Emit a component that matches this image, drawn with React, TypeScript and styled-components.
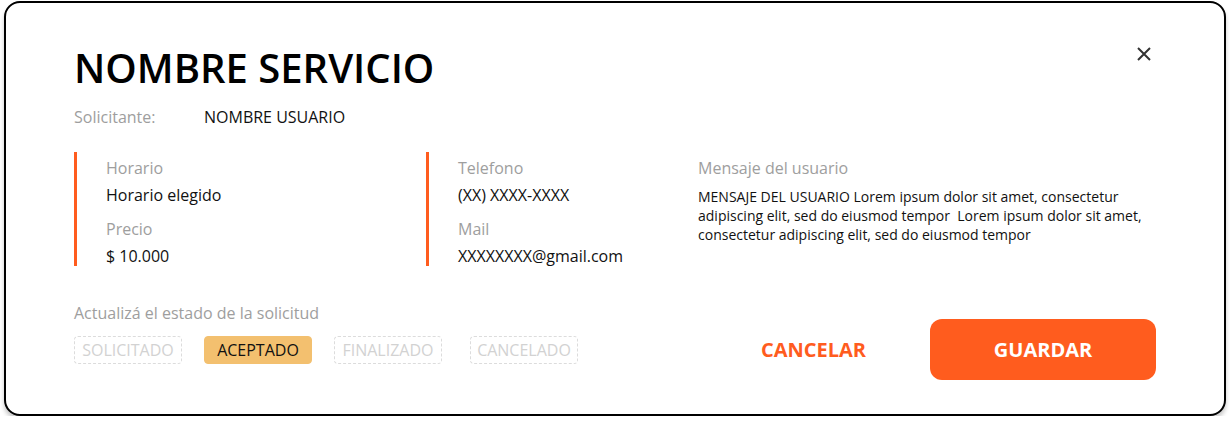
import React from "react";
import styled, { createGlobalStyle } from "styled-components";

const ORANGE = "#ff5c1e";

const Global = createGlobalStyle`
  html, body { margin: 0; padding: 0; background: #ffffff; }
  body { font-family: "Open Sans", "Noto Sans", sans-serif; color: #111; }
  * { box-sizing: border-box; }
`;

const Page = styled.div`
  padding: 1px 4px 0 4px;
`;

const Card = styled.div`
  width: 1222px;
  height: 415px;
  border: 2px solid #000;
  border-radius: 16px;
  background: #fff;
  box-shadow: 0 4px 4px rgba(0, 0, 0, 0.22);
  padding: 43px 68px 0 68px;
  display: flex;
  flex-direction: column;
`;

const Header = styled.div`
  display: flex;
  justify-content: space-between;
  align-items: flex-start;
`;

const Title = styled.h1`
  margin: 0;
  font-size: 40px;
  line-height: 44px;
  font-weight: 600;
  color: #000;
`;

const CloseButton = styled.button`
  width: 24px;
  height: 24px;
  margin-top: -4px;
  padding: 0;
  border: none;
  background: transparent;
  display: flex;
  align-items: center;
  justify-content: center;
  cursor: pointer;
`;

const InfoRow = styled.div`
  display: flex;
  margin-top: 17px;
`;

const Label = styled.span<{ $width?: number }>`
  color: #9e9e9e;
  font-size: 16px;
  line-height: 20px;
  ${(p) => (p.$width ? `width: ${p.$width}px;` : "")}
`;

const Value = styled.span`
  color: #111;
  font-size: 16px;
  line-height: 20px;
`;

const Details = styled.div`
  display: grid;
  grid-template-columns: 352px 272px 1fr;
  margin-top: 25px;
`;

const Column = styled.div<{ $bar?: boolean }>`
  display: flex;
  flex-direction: column;
  padding: 6px 0 1px ${(p) => (p.$bar ? 29 : 0)}px;
  border-left: ${(p) => (p.$bar ? `3px solid ${ORANGE}` : "none")};
  height: 114px;
`;

const Field = styled.div`
  display: flex;
  flex-direction: column;
  gap: 7px;
  & + & {
    margin-top: 14px;
  }
`;

const Message = styled.p`
  margin: 9px 0 0 0;
  font-size: 14px;
  line-height: 19px;
  color: #111;
  width: 458px;
`;

const Footer = styled.div`
  display: flex;
  justify-content: space-between;
  align-items: flex-end;
  margin-top: 37px;
`;

const StatusBlock = styled.div`
  display: flex;
  flex-direction: column;
  gap: 13px;
  padding-bottom: 16px;
`;

const Chips = styled.div`
  display: flex;
  gap: 22px;
`;

const Chip = styled.span<{ $active?: boolean; $extra?: number }>`
  width: 108px;
  height: 28px;
  display: flex;
  align-items: center;
  justify-content: center;
  font-size: 16px;
  border-radius: 4px;
  margin-left: ${(p) => p.$extra ?? 0}px;
  border: 1px ${(p) => (p.$active ? "solid #f3c06f" : "dashed #dcdcdc")};
  background: ${(p) => (p.$active ? "#f3c06f" : "transparent")};
  color: ${(p) => (p.$active ? "#111" : "#d2d2d2")};
`;

const Actions = styled.div`
  display: flex;
  align-items: center;
  gap: 64px;
`;

const TextButton = styled.button`
  border: none;
  background: transparent;
  padding: 0;
  font-family: inherit;
  font-size: 20px;
  font-weight: 700;
  color: ${ORANGE};
  cursor: pointer;
`;

const PrimaryButton = styled.button`
  width: 226px;
  height: 61px;
  border: none;
  border-radius: 12px;
  background: ${ORANGE};
  color: #fff;
  font-family: inherit;
  font-size: 20px;
  font-weight: 700;
  cursor: pointer;
`;

export default function App() {
  return (
    <>
      <Global />
      <Page>
        <Card>
          <Header>
            <Title>NOMBRE SERVICIO</Title>
            <CloseButton aria-label="Cerrar">
              <svg width="14" height="14" viewBox="0 0 14 14">
                <path d="M1 1 L13 13 M13 1 L1 13" stroke="#333" strokeWidth="2" strokeLinecap="butt" />
              </svg>
            </CloseButton>
          </Header>
          <InfoRow>
            <Label $width={130}>Solicitante:</Label>
            <Value>NOMBRE USUARIO</Value>
          </InfoRow>
          <Details>
            <Column $bar>
              <Field>
                <Label>Horario</Label>
                <Value>Horario elegido</Value>
              </Field>
              <Field>
                <Label>Precio</Label>
                <Value>$ 10.000</Value>
              </Field>
            </Column>
            <Column $bar>
              <Field>
                <Label>Telefono</Label>
                <Value>(XX) XXXX-XXXX</Value>
              </Field>
              <Field>
                <Label>Mail</Label>
                <Value>XXXXXXXX@gmail.com</Value>
              </Field>
            </Column>
            <Column>
              <Label>Mensaje del usuario</Label>
              <Message>
                MENSAJE DEL USUARIO Lorem ipsum dolor sit amet, consectetur adipiscing elit, sed do eiusmod
                tempor&nbsp; Lorem ipsum dolor sit amet, consectetur adipiscing elit, sed do eiusmod tempor
              </Message>
            </Column>
          </Details>
          <Footer>
            <StatusBlock>
              <Label>Actualizá el estado de la solicitud</Label>
              <Chips>
                <Chip>SOLICITADO</Chip>
                <Chip $active>ACEPTADO</Chip>
                <Chip>FINALIZADO</Chip>
                <Chip $extra={6}>CANCELADO</Chip>
              </Chips>
            </StatusBlock>
            <Actions>
              <TextButton>CANCELAR</TextButton>
              <PrimaryButton>GUARDAR</PrimaryButton>
            </Actions>
          </Footer>
        </Card>
      </Page>
    </>
  );
}
